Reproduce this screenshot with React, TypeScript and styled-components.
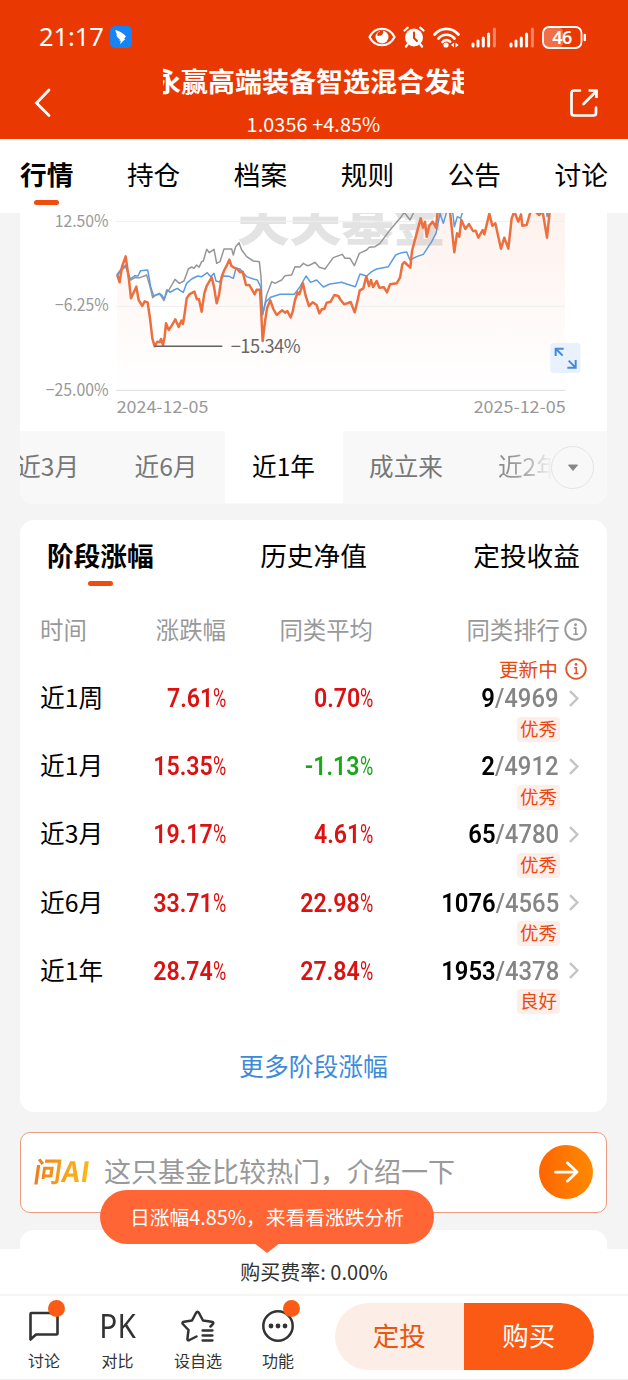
import React from "react";
import styled, { createGlobalStyle } from "styled-components";

const cjk = `"Noto Sans CJK SC", sans-serif`;

const Global = createGlobalStyle`
  * { box-sizing: border-box; }
  body { margin: 0; background: #f4f4f4; font-family: ${cjk}; color: #000; }
  svg { display: block; flex: none; }
`;

const Screen = styled.div`
  width: 628px;
  height: 1380px;
  display: flex;
  flex-direction: column;
  overflow: hidden;
  background: #f4f4f4;
  white-space: nowrap;
`;

const Header = styled.header`
  height: 139px;
  flex: none;
  background: #e93802;
  color: #fff;
`;

const StatusBar = styled.div`
  height: 62px;
  padding: 12px 41px 0 39px;
  display: flex;
  align-items: center;
`;

const Clock = styled.span`
  font: 400 25.5px/28px "Noto Sans", ${cjk};
  letter-spacing: -0.1px;
  width: 71px;
  height: 30px;
`;

const StatusIcons = styled.div`
  margin-left: auto;
  display: flex;
  align-items: center;
`;

const TitleBar = styled.div`
  height: 77px;
  display: grid;
  grid-template-columns: 163px 301px 1fr;
`;

const BackSlot = styled.div`
  padding: 26px 0 0 34px;
`;

const ShareSlot = styled.div`
  padding: 25px 0 0 104px;
`;

const TitleBlock = styled.div`
  display: flex;
  flex-direction: column;
`;

const FundName = styled.div`
  height: 38px;
  font: 700 27px/37px ${cjk};
  text-indent: -9px;
  overflow: hidden;
`;

const FundValue = styled.div`
  margin-top: 10px;
  font: 400 19.8px/27px ${cjk};
  letter-spacing: 0.1px;
  text-align: center;
`;

const MainTabs = styled.nav`
  height: 74px;
  flex: none;
  background: #fff;
  padding: 0 20px;
  display: flex;
  justify-content: space-between;
`;

const MainTab = styled.div<{ $active?: boolean }>`
  display: flex;
  flex-direction: column;
  align-items: center;
  font: ${(p) => (p.$active ? 700 : 400)} 26.7px/40px ${cjk};
  padding-top: 15px;
`;

const TabMark = styled.i`
  width: 25px;
  height: 5px;
  border-radius: 3px;
  background: #f04c10;
  margin-top: 6px;
`;

const Content = styled.main`
  flex: 1;
  min-height: 0;
  overflow: hidden;
  padding: 0 21px 0 20px;
  display: flex;
  flex-direction: column;
`;

const ChartCard = styled.section`
  height: 291px;
  flex: none;
  background: #fff;
  border-radius: 0 0 14px 14px;
  overflow: hidden;
`;

const Periods = styled.div`
  height: 73px;
  display: grid;
  grid-template-columns: 88px 117px 118px 127px 137px;
  background: #f8f8f8;
`;

const Period = styled.div<{ $active?: boolean; $align?: string }>`
  height: 72px;
  font: 400 24.6px/68px ${cjk};
  text-align: ${(p) => p.$align || "center"};
  color: ${(p) => (p.$active ? "#000" : "#777")};
  background: ${(p) => (p.$active ? "#fff" : "transparent")};
  overflow: hidden;
  display: ${(p) => (p.$align === "right" ? "flex" : "block")};
  justify-content: flex-end;
  padding-right: ${(p) => (p.$align === "right" ? "29px" : "1px")};
`;

const LastPeriod = styled.div`
  display: flex;
  align-items: center;
  padding-left: 28px;
`;

const FadeText = styled.span`
  width: 53px;
  margin-top: -5px;
  overflow: hidden;
  font: 400 24.6px/66px ${cjk};
  background: linear-gradient(90deg, #858585 0, #a8a8a8 50%, #f2f2f2 100%);
  background-clip: text;
  color: transparent;
`;

const MoreButton = styled.div`
  width: 43px;
  height: 43px;
  flex: none;
  border: 1px solid #e3e3e3;
  border-radius: 50%;
  display: grid;
  place-items: center;
`;

const StageCard = styled.section`
  height: 592px;
  flex: none;
  margin-top: 16px;
  background: #fff;
  border-radius: 14px;
  display: flex;
  flex-direction: column;
`;

const StageTabs = styled.div`
  height: 86px;
  padding: 0 27px;
  display: flex;
  justify-content: space-between;
`;

const Columns = styled.div`
  display: grid;
  grid-template-columns: 100px 86px 147px 1fr;
  padding-left: 20px;
`;

const HeadRow = styled(Columns)`
  height: 47px;
  font: 400 23.4px/46px ${cjk};
  color: #999;
`;

const Cell = styled.div`
  text-align: right;
`;

const InfoHead = styled.div`
  height: 46px;
  display: flex;
  align-items: center;
  justify-content: flex-end;
  gap: 4px;
  padding-right: 20px;
`;

const Updating = styled.div`
  height: 28px;
  padding: 4px 20px 0 0;
  display: flex;
  align-items: center;
  justify-content: flex-end;
  gap: 7px;
  font: 400 19.7px/24px ${cjk};
  color: #e64a12;
`;

const Row = styled(Columns)`
  height: 68.2px;
`;

const RowName = styled.div`
  font: 400 24.7px/30px ${cjk};
`;

const Figure = styled.div<{ $down?: boolean }>`
  display: flex;
  justify-content: flex-end;
  font: 600 25.2px/35px Roboto, sans-serif;
  color: ${(p) => (p.$down ? "#18a818" : "#dc1212")};
`;

const Digits = styled.span`
  transform: scaleX(0.92);
  transform-origin: 100% 50%;
`;

const Percent = styled.span`
  width: 13px;
  font-weight: 400;
  transform: scaleX(0.72);
  transform-origin: 0 50%;
`;

const RankCell = styled.div`
  display: flex;
  flex-direction: column;
  align-items: flex-end;
`;

const Rank = styled.div`
  height: 34px;
  display: flex;
  align-items: center;
  padding-right: 28px;
  font: 600 25.5px/34px Roboto, sans-serif;
`;

const Standing = styled.span`
  margin-right: 10px;
  transform: scaleX(0.935);
  transform-origin: 100% 50%;
`;

const Total = styled.span`
  font-weight: 500;
  color: #858585;
`;

const Badge = styled.span`
  width: 43px;
  height: 25px;
  margin: 1.5px 47px 0 0;
  border-radius: 4px;
  background: #fdeee9;
  color: #e64a12;
  font: 400 18.5px/23px ${cjk};
  text-align: center;
`;

const MoreLink = styled.div`
  margin-top: 25px;
  text-align: center;
  font: 400 24.8px/36px ${cjk};
  color: #3c8bd9;
`;

const AskCard = styled.section`
  height: 81px;
  flex: none;
  margin-top: 20px;
  border: 1px solid #eb9c80;
  border-radius: 10px;
  background: #fff;
  display: flex;
  align-items: center;
  padding: 0 13px 3px 13px;
`;

const AskLogo = styled.span`
  width: 60px;
  height: 38px;
  font: 700 28px/36px ${cjk};
  letter-spacing: 0.4px;
  transform: skewX(-8deg);
  background: linear-gradient(90deg, #ee7b20, #f6a51a 55%, #f8bd1d);
  background-clip: text;
  color: transparent;
`;

const AskText = styled.span`
  margin-left: 10px;
  font: 400 27px/38px ${cjk};
  color: #999;
  flex: 1;
`;

const Go = styled.span`
  width: 54px;
  height: 54px;
  margin-top: 2px;
  border-radius: 50%;
  background: linear-gradient(90deg, #ff6500, #ff8a00);
  display: grid;
  place-items: center;
`;

const NextCard = styled.section`
  height: 60px;
  flex: none;
  margin-top: 17px;
  border-radius: 14px;
  background: #fff;
`;

const Footer = styled.footer`
  height: 131px;
  flex: none;
  position: relative;
  background: #fff;
`;

const Bubble = styled.div`
  position: absolute;
  left: 100px;
  top: -59px;
  width: 334px;
  height: 54px;
  border-radius: 27px;
  background: #ff6535;
  color: #fff;
  font: 400 19.8px/53px ${cjk};
  text-align: center;
  &::after {
    content: "";
    position: absolute;
    left: 154px;
    top: 53px;
    border: 13px solid transparent;
    border-top: 10px solid #ff6535;
    border-bottom: 0;
  }
`;

const Fee = styled.div`
  height: 47px;
  border-bottom: 2px solid #f5f5f5;
  font: 400 20px/45px ${cjk};
  text-align: center;
  color: #333;
`;

const Actions = styled.div`
  height: 84px;
  display: flex;
  border-bottom: 1px solid #eee;
  padding: 7px 34.5px 0 0;
`;

const NavItem = styled.div<{ $w: number }>`
  width: ${(p) => p.$w}px;
  display: flex;
  flex-direction: column;
  align-items: center;
  font: 400 16px/22px ${cjk};
  color: #333;
`;

const NavIcon = styled.div`
  position: relative;
  height: 46px;
  display: flex;
  align-items: center;
`;

const Dot = styled.i`
  position: absolute;
  right: -6px;
  top: -3px;
  width: 17px;
  height: 17px;
  border-radius: 50%;
  background: #fb5b14;
`;

const PK = styled.span`
  font: 400 32px/40px "Noto Sans", sans-serif;
  transform: scaleX(0.93);
`;

const Buttons = styled.div`
  margin-left: auto;
  width: 259px;
  height: 67px;
  border-radius: 34px;
  overflow: hidden;
  display: flex;
`;

const Button = styled.div<{ $primary?: boolean }>`
  flex: 1;
  background: ${(p) => (p.$primary ? "#fb5a14" : "#fcede7")};
  color: ${(p) => (p.$primary ? "#fff" : "#e8560f")};
  font: 400 26.5px/64px ${cjk};
  text-align: center;
`;

const ORANGE =
  "292,210 299,232 306,185 317,154 327,225 333,280 340,265 349,245 356,285 367,303 374,289 383,292 390,340 397,400 404,424 412,410 419,412 423,402 429,420 434,395 438,355 446,375 455,362 466,343 476,366 484,347 489,357 494,325 500,280 508,268 523,260 531,283 537,283 545,320 553,265 560,243 575,217 582,245 590,295 597,270 605,215 613,195 620,182 628,164 634,182 640,187 651,191 660,202 668,200 678,240 688,240 704,268 710,254 720,254 723,310 728,408 735,350 741,310 751,286 760,312 770,330 779,322 787,316 795,323 802,318 812,337 818,320 825,285 833,262 838,268 849,235 857,272 867,303 878,292 890,300 898,325 906,312 913,312 920,293 932,290 943,270 955,273 962,285 973,298 992,291 1004,322 1012,290 1019,257 1030,250 1039,214 1047,243 1053,225 1059,246 1070,228 1078,248 1092,247 1101,262 1110,238 1130,235 1140,218 1147,178 1153,171 1171,188 1176,138 1190,85 1202,40 1209,68 1215,50 1220,95 1228,62 1238,50 1248,68 1253,20 1270,-20 1290,20 1303,142 1311,85 1318,95 1324,45 1336,72 1347,57 1359,78 1367,77 1375,98 1388,75 1393,88 1408,26 1417,62 1426,55 1443,131 1453,98 1465,131 1475,40 1483,20 1495,50 1503,28 1507,62 1520,60 1530,25 1537,10 1557,30 1568,20 1581,98 1588,30 1591,10";
const BLUE =
  "290,210 305,190 317,180 330,222 345,212 354,213 362,197 383,195 392,245 401,273 418,265 425,270 433,283 443,255 450,262 462,255 472,250 480,256 490,262 500,235 515,222 533,213 545,215 562,203 572,215 582,205 588,228 598,231 610,213 627,214 640,220 648,190 660,192 680,215 700,222 712,225 722,245 727,330 738,290 752,277 780,268 823,268 840,245 858,213 872,232 890,225 910,246 930,237 965,232 980,237 1006,245 1020,207 1040,213 1055,200 1070,192 1105,185 1127,150 1145,143 1160,141 1170,165 1190,155 1210,148 1235,110 1248,85 1260,25 1270,55 1280,20 1298,20 1303,65 1312,35 1322,40 1328,20 1330,0 1580,0 1581,35 1585,15";
const GRAY =
  "290,215 305,195 317,185 332,225 345,218 360,218 380,210 390,245 398,278 408,270 420,268 432,287 440,255 445,258 465,223 478,235 492,228 505,192 515,186 522,190 530,180 537,187 545,170 550,168 560,133 568,143 582,133 590,175 600,170 612,132 635,132 640,150 647,125 657,113 665,135 680,155 700,168 718,170 723,215 728,330 740,270 755,230 765,235 785,225 795,212 815,210 825,185 840,186 850,175 862,182 870,180 885,172 898,187 915,192 925,178 940,158 967,148 975,160 990,160 1003,182 1018,145 1040,135 1048,127 1065,125 1080,115 1095,95 1110,75 1140,40 1153,22 1170,45 1185,15";

/* Chart units are a third of a pixel. */
const Chart = () => (
  <svg width="587" height="218" viewBox="0 24 1761 654" fontFamily='"Noto Sans CJK SC", sans-serif'>
    <defs>
      <linearGradient id="fade" x1="0" y1="24" x2="0" y2="555" gradientUnits="userSpaceOnUse">
        <stop offset="0" stopColor="#f4622f" stopOpacity=".085" />
        <stop offset="1" stopColor="#f4622f" stopOpacity="0" />
      </linearGradient>
    </defs>
    <text x="652" y="107" fontSize="145" fontWeight="900" fill="#e3e3e3" textLength="625" lengthAdjust="spacingAndGlyphs">天天基金</text>
    <polygon points={`290,555 ${ORANGE} 1635,10 1635,555`} fill="url(#fade)" />
    <path d="M288 49H1635M288 304H1635" stroke="#eee" strokeWidth="3" />
    <path d="M288 556H1637" stroke="#dedede" strokeWidth="3" />
    <g fill="none" strokeLinejoin="round">
      <polyline points={GRAY} stroke="#969696" strokeWidth="4.5" />
      <polyline points={BLUE} stroke="#5b9be0" strokeWidth="4.5" />
      <polyline points={ORANGE} stroke="#ed6f3e" strokeWidth="7.5" />
    </g>
    <path d="M404 424H607" stroke="#606060" strokeWidth="4.5" />
    <text x="632" y="444" fontSize="55" fill="#666" textLength="210">−15.34%</text>
    <g fontSize="50" fill="#999" textAnchor="end">
      <text x="266" y="67" textLength="162" lengthAdjust="spacingAndGlyphs">12.50%</text>
      <text x="266" y="319" textLength="161" lengthAdjust="spacingAndGlyphs">−6.25%</text>
      <text x="266" y="572" textLength="189" lengthAdjust="spacingAndGlyphs">−25.00%</text>
    </g>
    <g fontSize="50" fill="#999">
      <text x="290" y="625" textLength="275" lengthAdjust="spacingAndGlyphs">2024-12-05</text>
      <text x="1361" y="625" textLength="276" lengthAdjust="spacingAndGlyphs">2025-12-05</text>
    </g>
    <rect x="1591" y="414" width="90" height="90" rx="9" fill="#e8f1fc" />
    <path d="M1607 453V431H1631M1608 432L1628 452M1667 465V488H1642M1666 487L1646 467" fill="none" stroke="#4489dd" strokeWidth="6" />
  </svg>
);

const Info = ({ color, size }: { color: string; size: number }) => (
  <svg width={size} height={size} viewBox="0 0 24 24" fill="none" stroke={color}>
    <circle cx="12" cy="12" r="10.7" strokeWidth="2" />
    <path d="M10 10.600H12.300V17M9.700 17h5" strokeWidth="1.7" />
    <circle cx="12" cy="7" r="1.5" fill={color} stroke="none" />
  </svg>
);

const Chevron = () => (
  <svg width="10" height="17" viewBox="0 0 10 17" fill="none" stroke="#c4c4c4" strokeWidth="2.4">
    <path d="M1 1.2l7.4 7.3L1 15.8" />
  </svg>
);

const Signal = () => (
  <svg width="26" height="21" viewBox="0 0 26 21" stroke="#fff" strokeWidth="3" strokeLinecap="round">
    <path d="M2 19v-2M7 19v-5M12.3 19V11M17.6 19V7" />
    <path d="M23.4 19V2" opacity=".4" />
  </svg>
);

const StatusGlyphs = () => (
  <StatusIcons>
    <svg width="28" height="20" viewBox="0 0 28 20" fill="none" stroke="#fff">
      <path d="M1.5 10C7-1 21-1 26.500 10C21 21 7 21 1.500 10Z" strokeWidth="2.2" />
      <circle cx="14" cy="10" r="6.500" fill="#fff" stroke="none" />
      <path d="M9.500 7c3 .5 4.500-1 4-3.500" stroke="#e93802" strokeWidth="3.500" />
    </svg>
    <svg width="22" height="22" viewBox="0 0 22 22" fill="none" strokeLinecap="round" style={{ marginLeft: 7 }}>
      <circle cx="11" cy="11.500" r="9" fill="#fff" />
      <path d="M1.500 4.500L4.800 1.700M20.500 4.500L17.200 1.700M4.500 18.500L3 20.500M17.500 18.500L19 20.500" stroke="#fff" strokeWidth="2.200" />
      <path d="M11 6.500V12l3 3" stroke="#e93802" strokeWidth="2" />
    </svg>
    <svg width="27" height="21" viewBox="0 0 27 21" fill="none" stroke="#fff" strokeWidth="2.700" strokeLinecap="round" style={{ marginLeft: 8 }}>
      <path d="M1.500 7.500C8 0 19 0 25.500 7.500M5.500 11.500c4.500-5 11.500-5 16 0M9.500 15c2-2.500 5.500-2.500 7.500-.3" />
      <circle cx="13" cy="18" r="2.600" fill="#fff" stroke="none" />
      <path d="M21 15.500v5l-3-2.500zM22.500 15.500v5l3.200-2.500z" fill="#fff" stroke="none" />
    </svg>
    <svg width="11" height="1" />
    <Signal />
    <svg width="12" height="1" />
    <Signal />
    <svg width="45" height="23" viewBox="0 0 45 23" style={{ marginLeft: 7 }}>
      <rect x="2" y="2" width="19" height="19" rx="4" fill="#fff" opacity=".28" />
      <rect x="1" y="1" width="38.500" height="21" rx="6" fill="none" stroke="#fff" strokeWidth="1.800" />
      <path d="M42.800 9v5" stroke="#fff" strokeWidth="2.400" strokeLinecap="round" />
      <text x="20.300" y="18" fontFamily="Noto Sans" fontWeight="600" fontSize="18" fill="#fff" textAnchor="middle" textLength="20">46</text>
    </svg>
  </StatusIcons>
);

const rows = [
  { name: "近1周", own: "7.61", avg: "0.70", rank: "9", total: "4969", grade: "优秀" },
  { name: "近1月", own: "15.35", avg: "-1.13", rank: "2", total: "4912", grade: "优秀" },
  { name: "近3月", own: "19.17", avg: "4.61", rank: "65", total: "4780", grade: "优秀" },
  { name: "近6月", own: "33.71", avg: "22.98", rank: "1076", total: "4565", grade: "优秀" },
  { name: "近1年", own: "28.74", avg: "27.84", rank: "1953", total: "4378", grade: "良好" },
];

export default function App() {
  return (
    <Screen>
      <Global />
      <Header>
        <StatusBar>
          <Clock>21:17</Clock>
          <svg width="22" height="22" viewBox="0 0 22 22">
            <rect width="22" height="22" rx="5" fill="#1684f5" />
            <path d="M5.500 4c4 1 8 3.500 10.500 6.500l-1.800 2.300 1 .2-5.200 5.200.8-3.500-1.500-.2.600-1.200C7.500 12 6.500 10 6.300 8.500l1 .2C6 7 5.500 5.500 5.500 4z" fill="#fff" />
          </svg>
          <StatusGlyphs />
        </StatusBar>
        <TitleBar>
          <BackSlot>
            <svg width="18" height="30" viewBox="0 0 18 30" fill="none" stroke="#fff" strokeWidth="2.800" strokeLinecap="round">
              <path d="M15 2L2.500 15 15 27.500" />
            </svg>
          </BackSlot>
          <TitleBlock>
            <FundName>永赢高端装备智选混合发起</FundName>
            <FundValue>1.0356 +4.85%</FundValue>
          </TitleBlock>
          <ShareSlot>
            <svg width="32" height="32" viewBox="0 0 32 32" fill="none" stroke="#fff" strokeWidth="2.700" strokeLinejoin="round" strokeLinecap="round">
              <path d="M12 3.500H6Q3.500 3.500 3.500 6V26Q3.500 28.500 6 28.500H25.500Q28 28.500 28 26V20.500M15.500 17L28 4.500" />
              <path d="M20.500 3.500H28.500V11" strokeLinecap="butt" strokeLinejoin="miter" />
            </svg>
          </ShareSlot>
        </TitleBar>
      </Header>

      <MainTabs>
        <MainTab $active>行情<TabMark /></MainTab>
        {["持仓", "档案", "规则", "公告", "讨论"].map((t) => (
          <MainTab key={t}>{t}</MainTab>
        ))}
      </MainTabs>

      <Content>
        <ChartCard>
          <Chart />
          <Periods>
            <Period $align="right">近3月</Period>
            <Period>近6月</Period>
            <Period $active>近1年</Period>
            <Period>成立来</Period>
            <LastPeriod>
              <FadeText>近2年</FadeText>
              <MoreButton>
                <svg width="12" height="8" viewBox="0 0 12 8"><path d="M1.500 1h9L6 6.500z" fill="#888" stroke="#888" strokeLinejoin="round" /></svg>
              </MoreButton>
            </LastPeriod>
          </Periods>
        </ChartCard>

        <StageCard>
          <StageTabs>
            <MainTab $active>阶段涨幅<TabMark /></MainTab>
            <MainTab>历史净值</MainTab>
            <MainTab>定投收益</MainTab>
          </StageTabs>
          <HeadRow>
            <div>时间</div>
            <Cell>涨跌幅</Cell>
            <Cell>同类平均</Cell>
            <InfoHead>同类排行<Info color="#999" size={23} /></InfoHead>
          </HeadRow>
          <Updating>更新中<Info color="#e0572f" size={22} /></Updating>
          {rows.map((r) => (
            <Row key={r.name}>
              <RowName>{r.name}</RowName>
              <Figure><Digits>{r.own}</Digits><Percent>%</Percent></Figure>
              <Figure $down={r.avg.startsWith("-")}><Digits>{r.avg}</Digits><Percent>%</Percent></Figure>
              <RankCell>
                <Rank>
                  <Standing>{r.rank}<Total>/{r.total}</Total></Standing>
                  <Chevron />
                </Rank>
                <Badge>{r.grade}</Badge>
              </RankCell>
            </Row>
          ))}
          <MoreLink>更多阶段涨幅</MoreLink>
        </StageCard>

        <AskCard>
          <AskLogo>问AI</AskLogo>
          <AskText>这只基金比较热门，介绍一下</AskText>
          <Go>
            <svg width="26" height="22" viewBox="0 0 28 24" fill="none" stroke="#fff" strokeWidth="3" strokeLinecap="round" strokeLinejoin="round">
              <path d="M2.500 12H26M15.500 2L26 12 15.500 22" />
            </svg>
          </Go>
        </AskCard>
        <NextCard />
      </Content>

      <Footer>
        <Bubble>日涨幅4.85%，来看看涨跌分析</Bubble>
        <Fee>购买费率: 0.00%</Fee>
        <Actions>
          <NavItem $w={88}>
            <NavIcon>
              <svg width="30" height="31" viewBox="0 0 30 31" fill="none" stroke="#333" strokeWidth="2.600" strokeLinejoin="round">
                <path d="M1.500 28.500V3Q1.500 2 2.500 2H27.500Q28.500 2 28.500 3V22.500Q28.500 23.500 27.500 23.500H7Z" />
              </svg>
              <Dot />
            </NavIcon>
            讨论
          </NavItem>
          <NavItem $w={59}>
            <NavIcon><PK>PK</PK></NavIcon>
            对比
          </NavItem>
          <NavItem $w={102}>
            <NavIcon>
              <svg width="34" height="32" viewBox="0 0 34 32" fill="none" stroke="#333" strokeWidth="2.500" strokeLinecap="round" strokeLinejoin="round">
                <path d="M15.500 26.500L8.500 30Q6 31 6.500 28L7.500 20 1.800 14Q.8 12.300 3 11.800L11 10.500 15 3Q16.500.5 18 3L22 10.500 30.500 11.800Q33.500 12.300 31.500 14.500L29.500 16.500" />
                <path d="M21.500 20.500H31.500M21.500 25.500H31.500M21.500 30.500H31.500" strokeWidth="2.300" />
              </svg>
            </NavIcon>
            设自选
          </NavItem>
          <NavItem $w={58}>
            <NavIcon>
              <svg width="32" height="32" viewBox="0 0 32 32">
                <circle cx="16" cy="16" r="14.700" fill="none" stroke="#333" strokeWidth="2.500" />
                <g fill="#333"><circle cx="9" cy="16" r="2.400" /><circle cx="16" cy="16" r="2.400" /><circle cx="23" cy="16" r="2.400" /></g>
              </svg>
              <Dot />
            </NavIcon>
            功能
          </NavItem>
          <Buttons>
            <Button>定投</Button>
            <Button $primary>购买</Button>
          </Buttons>
        </Actions>
      </Footer>
    </Screen>
  );
}
